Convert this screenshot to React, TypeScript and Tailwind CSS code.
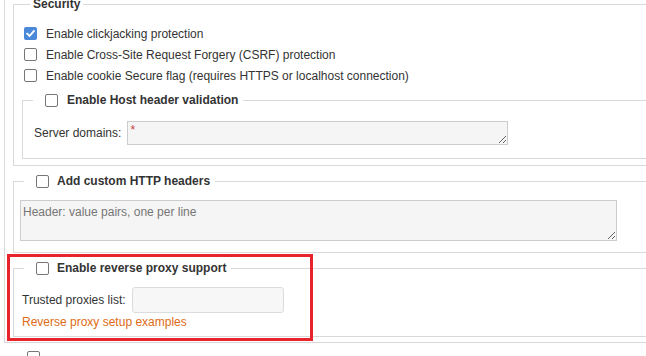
import React from "react";

function Box({ checked }: { checked?: boolean }) {
  return checked ? (
    <span className="inline-flex w-[13px] h-[13px] shrink-0 items-center justify-center rounded-[2px] bg-[#4a88da]">
      <svg width="11" height="11" viewBox="0 0 12 12">
        <path d="M2.4 6.2 L5 8.7 L9.7 3.3" stroke="white" strokeWidth="2" fill="none" strokeLinecap="square" />
      </svg>
    </span>
  ) : (
    <span className="inline-block w-[13px] h-[13px] shrink-0 rounded-[2px] border border-[#767676] bg-white" />
  );
}

function CheckRow({ label, checked }: { label: string; checked?: boolean }) {
  return (
    <div className="flex h-[21px] items-center pl-[2px]">
      <Box checked={checked} />
      <span className="ml-[9px] leading-[14px]">{label}</span>
    </div>
  );
}

function Legend({ label, gap = 8 }: { label: string; gap?: number }) {
  return (
    <legend className="ml-[10px] pl-[12px] pr-[5px]">
      <span className="flex items-center h-[14px]">
        <Box />
        <span className={gap === 9 ? "ml-[9px] font-bold leading-[14px]" : "ml-[8px] font-bold leading-[14px]"}>{label}</span>
      </span>
    </legend>
  );
}

export default function App() {
  return (
    <div className="relative w-[646px] h-[356px] overflow-hidden bg-white text-[12px] text-[#333] font-['Liberation_Sans',Arial,sans-serif]">
      <div className="ml-[4px] w-[900px] border-l border-b border-[#d9d9d9] pb-[5px]">
        {/* Security */}
        <fieldset className="-mt-[3px] ml-[8px] w-[800px] border border-[#d9d9d9]">
          <legend className="ml-[16px] px-[3px] font-bold leading-[14px]">Security</legend>
          <div className="pl-[8px] pt-[12px] pb-[6px]">
            <CheckRow label="Enable clickjacking protection" checked />
            <CheckRow label="Enable Cross-Site Request Forgery (CSRF) protection" />
            <CheckRow label="Enable cookie Secure flag (requires HTTPS or localhost connection)" />
            <fieldset className="mt-[7px] w-[760px] border border-[#d9d9d9]">
              <Legend label="Enable Host header validation" gap={9} />
              <div className="pl-[11px] pt-[14px] pb-[13px] flex items-center">
                <span className="leading-[14px]">Server domains:</span>
                <textarea
                  className="ml-[6px] w-[381px] h-[24px] border border-[#cccccc] bg-[#f5f5f5] px-[2px] pt-[1px] text-[12px] leading-[14px] text-[#c94040] resize-y"
                  defaultValue="*"
                />
              </div>
            </fieldset>
          </div>
        </fieldset>

        {/* Custom headers */}
        <fieldset className="mt-[8px] ml-[8px] w-[800px] border border-[#d9d9d9]">
          <Legend label="Add custom HTTP headers" />
          <div className="pl-[6px] pt-[12px] pb-[11px]">
            <textarea
              className="block w-[597px] h-[41px] border border-[#cccccc] bg-[#f5f5f5] px-[2px] pt-[4px] text-[12px] leading-[14px] placeholder:text-[#757575] resize-y"
              placeholder="Header: value pairs, one per line"
            />
          </div>
        </fieldset>

        {/* Reverse proxy */}
        <fieldset className="mt-[8px] ml-[8px] w-[800px] border border-[#d9d9d9]">
          <Legend label="Enable reverse proxy support" />
          <div className="pl-[8px] pt-[12px] pb-[7px]">
            <div className="flex items-center">
              <span className="leading-[14px]">Trusted proxies list:</span>
              <input
                type="text"
                className="ml-[6px] w-[152px] h-[26px] rounded-[3px] border border-[#dcdcdc] bg-[#f7f7f7] px-[3px] text-[12px]"
              />
            </div>
            <div className="mt-[2px] leading-[14px] text-[#e06b16]">Reverse proxy setup examples</div>
          </div>
        </fieldset>
      </div>
      <div className="mt-[8px] ml-[27px]">
        <Box />
      </div>

      {/* annotation highlight */}
      <div className="absolute left-[7px] top-[254px] w-[306px] h-[87px] border-[3px] border-[#e8232b]" />
    </div>
  );
}
